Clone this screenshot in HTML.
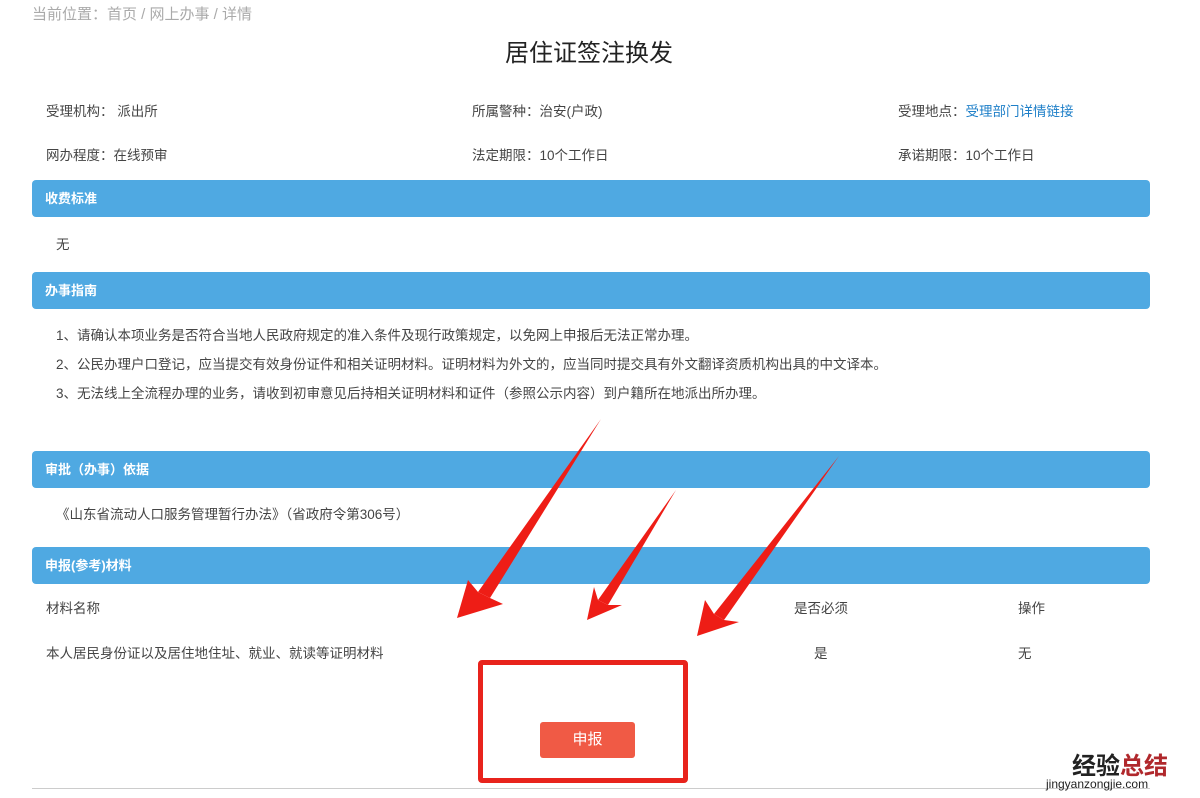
<!DOCTYPE html>
<html><head><meta charset="utf-8"><style>
*{margin:0;padding:0;box-sizing:border-box}
body{width:1200px;height:798px;background:#fff;position:relative;overflow:hidden;font-family:"Liberation Sans","Noto Sans CJK SC",sans-serif;color:#444;font-size:13.5px}
.a{position:absolute;white-space:nowrap}
.bar{position:absolute;left:32px;width:1118px;height:37px;background:#4fa9e2;border-radius:4px;color:#fff;font-weight:bold;font-size:13px;line-height:37px;padding-left:13px}
</style></head><body>
<div class="a" style="left:32px;top:3px;color:#aaa;font-size:15px">当前位置：首页 / 网上办事 / 详情</div>
<div class="a" style="left:505px;top:33px;font-size:24px;color:#222">居住证签注换发</div>
<div class="a" style="left:46px;top:100px">受理机构： 派出所</div>
<div class="a" style="left:472px;top:100px">所属警种：治安(户政)</div>
<div class="a" style="left:898px;top:100px">受理地点：<span style="color:#1e7fc8">受理部门详情链接</span></div>
<div class="a" style="left:46px;top:144px">网办程度：在线预审</div>
<div class="a" style="left:472px;top:144px">法定期限：10个工作日</div>
<div class="a" style="left:898px;top:144px">承诺期限：10个工作日</div>
<div class="bar" style="top:180px">收费标准</div>
<div class="a" style="left:56px;top:233px">无</div>
<div class="bar" style="top:272px">办事指南</div>
<div class="a" style="left:56px;top:324px">1、请确认本项业务是否符合当地人民政府规定的准入条件及现行政策规定，以免网上申报后无法正常办理。</div>
<div class="a" style="left:56px;top:353px">2、公民办理户口登记，应当提交有效身份证件和相关证明材料。证明材料为外文的，应当同时提交具有外文翻译资质机构出具的中文译本。</div>
<div class="a" style="left:56px;top:382px">3、无法线上全流程办理的业务，请收到初审意见后持相关证明材料和证件（参照公示内容）到户籍所在地派出所办理。</div>
<div class="bar" style="top:451px">审批（办事）依据</div>
<div class="a" style="left:56px;top:503px">《山东省流动人口服务管理暂行办法》（省政府令第306号）</div>
<div class="bar" style="top:547px">申报(参考)材料</div>
<div class="a" style="left:46px;top:597px">材料名称</div>
<div class="a" style="left:794px;top:597px">是否必须</div>
<div class="a" style="left:1018px;top:597px">操作</div>
<div class="a" style="left:46px;top:642px">本人居民身份证以及居住地住址、就业、就读等证明材料</div>
<div class="a" style="left:814px;top:642px">是</div>
<div class="a" style="left:1018px;top:642px">无</div>
<div class="a" style="left:32px;top:788px;width:1118px;height:1px;background:#ccc"></div>
<div class="a" style="left:478px;top:660px;width:210px;height:123px;border:5px solid #e8231c;border-radius:4px"></div>
<div class="a" style="left:540px;top:722px;width:95px;height:36px;background:#f05a45;border-radius:3px;color:#fff;font-size:15px;text-align:center;line-height:36px">申报</div>
<svg class="a" style="left:0;top:0" width="1200" height="798">
<g fill="#ee1d16">
<polygon points="601,419 478,592 490,598"/><polygon points="457,618 468,580 478,592 490,598 503,604"/>
<polygon points="676,490 598,600 608,605"/><polygon points="587,620 594,587 598,600 608,605 622,605"/>
<polygon points="839,456 714,614 724,620"/><polygon points="697,636 705,600 714,614 724,620 739,622"/>
</g>
</svg>
<div class="a" style="left:1072px;top:746px;font-size:24px;font-weight:bold;color:#222">经验<span style="color:#b0282c">总结</span></div>
<div class="a" style="left:1046px;top:777px;font-size:12px;color:#222">jingyanzongjie.com</div>
</body></html>
